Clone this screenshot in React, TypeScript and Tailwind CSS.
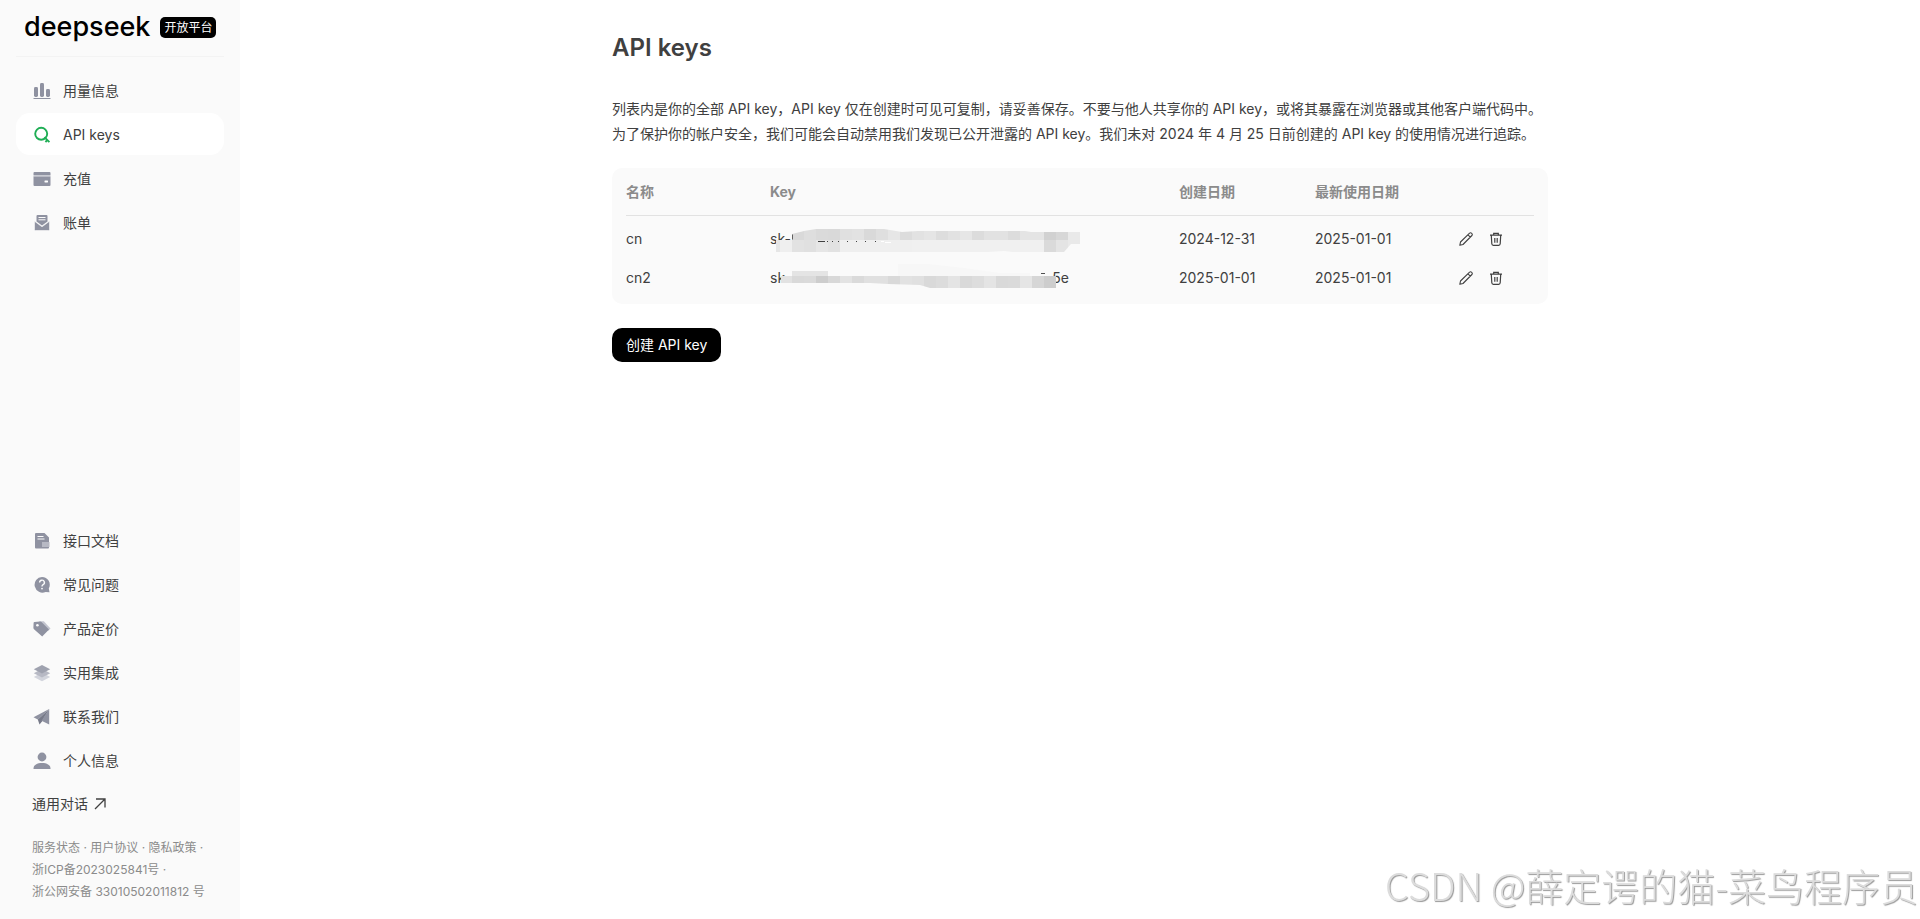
import React from 'react';

interface NavItem {
  label: string;
  icon: React.ReactNode;
  active?: boolean;
}

interface ApiKey {
  name: string;
  start: string;
  end: string;
  created: string;
  lastUsed: string;
  mask: React.ReactNode;
}

const Icon = ({ children }: { children: React.ReactNode }) => (
  <svg viewBox="0 0 18 18" className="h-[18px] w-[18px] shrink-0" fill="#8f92a1" aria-hidden="true">
    {children}
  </svg>
);

const mainNav: NavItem[] = [
  {
    label: '用量信息',
    icon: (
      <Icon>
        <rect x="1" y="5" width="4" height="10" rx="1.4" />
        <rect x="7" y="1" width="4" height="14" rx="1.4" />
        <rect x="13" y="7" width="4" height="8" rx="1.4" />
        <rect x="0.5" y="16" width="17" height="1" />
      </Icon>
    ),
  },
  {
    label: 'API keys',
    active: true,
    icon: (
      <Icon>
        <g fill="none" stroke="#1fae55" strokeWidth="1.9">
          <circle cx="8.2" cy="7.8" r="6" />
          <path d="M11.4 11.2 16.4 16.2M12.4 16l2.4-2.4" />
        </g>
      </Icon>
    ),
  },
  {
    label: '充值',
    icon: (
      <Icon>
        <path d="M1.5 2h15a1 1 0 0 1 1 1v2H.5V3a1 1 0 0 1 1-1Z" />
        <rect x="0.5" y="5" width="17" height="1.5" opacity=".45" />
        <path d="M.5 6.5h17V15a1 1 0 0 1-1 1h-15a1 1 0 0 1-1-1Z" />
        <rect x="11.5" y="10.5" width="3.5" height="2" rx=".4" fill="#fff" />
      </Icon>
    ),
  },
  {
    label: '账单',
    icon: (
      <Icon>
        <path d="M4.5 1h9a1 1 0 0 1 1 1v5.5L9 11.5 3.5 7.5V2a1 1 0 0 1 1-1Z" />
        <path d="M5.5 3.5h7M5.5 5.8h7" stroke="#fafafa" strokeWidth="1" />
        <path d="M1.5 7.2 9 12.8l7.5-5.6V15.5a1 1 0 0 1-1 1h-13a1 1 0 0 1-1-1Z" stroke="#fafafa" strokeWidth=".6" />
      </Icon>
    ),
  },
];

const helpNav: NavItem[] = [
  {
    label: '接口文档',
    icon: (
      <Icon>
        <path d="M3 1h8.5L16 5.5V10H9v6.5H3a1 1 0 0 1-1-1V2a1 1 0 0 1 1-1Z" />
        <path d="M4.5 4.5h6M4.5 7h7" stroke="#fafafa" strokeWidth="1" />
        <rect x="9" y="10" width="7.5" height="5" fill="#b7b9c4" />
        <path d="M9 15h7v.5a1 1 0 0 1-1 1H9Z" />
      </Icon>
    ),
  },
  {
    label: '常见问题',
    icon: (
      <Icon>
        <path d="M9 1a7.8 7.8 0 0 1 6.8 11.6l.7 3.7-3.9-.4A7.8 7.8 0 1 1 9 1Z" />
        <path d="M6.6 6.6a2.4 2.4 0 1 1 3.5 2.1c-.8.5-1.1.9-1.1 1.7" fill="none" stroke="#fafafa" strokeWidth="1.4" />
        <circle cx="9" cy="12.6" r=".9" fill="#fafafa" />
      </Icon>
    ),
  },
  {
    label: '产品定价',
    icon: (
      <Icon>
        <path d="M6 1.3 10.8 1.2 17.5 8.5 15 11Z" fill="#c3c5cf" />
        <path d="M1.5 2 7 1.5a2 2 0 0 1 1.5.5l7.5 7.5-6.8 7L1 9.3a2 2 0 0 1-.6-1.5L.6 3a1 1 0 0 1 .9-1Z" />
        <circle cx="4.4" cy="5.3" r="1.3" fill="#fafafa" />
      </Icon>
    ),
  },
  {
    label: '实用集成',
    icon: (
      <Icon>
        <path d="M9 8.5 17.2 13 9 17.2.8 13Z" fill="#d2d4dc" />
        <path d="M9 4.8 17.2 9.3 9 13.5.8 9.3Z" fill="#b7b9c4" />
        <path d="M9 1 17.2 5.3 9 9.6.8 5.3Z" fill="#9fa2af" />
      </Icon>
    ),
  },
  {
    label: '联系我们',
    icon: (
      <Icon>
        <path d="M16.2 1 .5 9.3l4.3 2.2Z" />
        <path d="M16.2 1 4.8 11.5l1.7 5L9 13.4Z" fill="#777a89" />
        <path d="M16.2 1 8.5 12.7l7.7 3.8Z" />
      </Icon>
    ),
  },
  {
    label: '个人信息',
    icon: (
      <Icon>
        <circle cx="9" cy="5" r="4.4" />
        <path d="M.5 17v-.6C.5 13 4.2 11 9 11s8.5 2 8.5 5.4v.6Z" />
      </Icon>
    ),
  },
];

// Grey level of every 12px block, left to right
const firstTop = [
  '#d9d9d9', '#dedede', '#dadada', '#d9d9d9', '#e0e0e0', '#e2e2e2', '#d9d9d9', '#dfdfdf',
  '#e6e6e6', '#dcdcdc', '#e2e2e2', '#e5e5e5', '#dddddd', '#e2e2e2', '#e6e6e6', '#dcdcdc',
  '#e2e2e2', '#e2e2e2', '#dcdcdc', '#e4e4e4', '#e4e4e4', '#d1d1d1', '#d7d7d7', '#e9e9e9',
];
const firstBottom = [
  '#e2e2e2', '#e0e0e0', '#e6e6e6', '#e2e2e2', '#efefef', '#efefef', '#efefef', '#efefef',
  '#efefef', '#efefef', '#f0f0f0', '#f0f0f0', '#f0f0f0', '#f0f0f0', '#f0f0f0', '#f0f0f0',
  '#f0f0f0', '#f0f0f0', '#f0f0f0', '#f0f0f0', '#f0f0f0', '#dadada', '#e4e4e4', '#e9e9e9',
];
const secondRow = [
  '#e2e2e2', '#d9d9d9', '#dadada', '#cdcdcd', '#d8d8d8', '#e3e3e3', '#dadada', '#e0e0e0',
  '#e0e0e0', '#d9d9d9', '#e2e2e2', '#e0e0e0', '#d9d9d9', '#dcdcdc', '#e4e4e4', '#d9d9d9',
  '#dddddd', '#e4e4e4', '#d9d9d9', '#dadada', '#e5e5e5', '#d6d6d6', '#cdcdcd',
];

const FirstMask = () => (
  <svg width="310" height="39" className="absolute left-0 top-0" aria-hidden="true">
    <clipPath id="mask-a">
      <path d="M22 14 34 11 46 9H114L132 12 148 11H255L261 12H310V24H301L294 32H242L234 31 218 32H6V20H22Z" />
    </clipPath>
    <g clipPath="url(#mask-a)">
      <rect x="6" y="19" width="4" height="13" fill="#e6e6e6" />
      <rect x="10" y="19" width="12" height="13" fill="#efefef" />
      {firstTop.map((fill, i) => (
        <rect key={i} x={22 + i * 12} y="8" width="12" height="12" fill={fill} />
      ))}
      {firstBottom.map((fill, i) => (
        <rect key={i} x={22 + i * 12} y="20" width="12" height="12" fill={fill} />
      ))}
    </g>
    <path d="M22.5 14.5v5" stroke="#606060" />
    <path d="M48 21.5h7M57 21.5h1M62 21.5h1M68 21.5h1M77 21.5h1M86 21.5h1M95 21.5h1M105 21.5h1" stroke="#404040" />
    <path d="M111 21.5h3M115 22.5h6" stroke="#fff" />
  </svg>
);

const SecondMask = () => (
  <svg width="310" height="39" className="absolute left-0 top-0" aria-hidden="true">
    <path d="M128 5h30l36 4 36 5h30v10H128Z" fill="#f7f7f7" />
    <clipPath id="mask-b">
      <path d="M11 17H22V12H58V17H286V29H160L150 26 118 25 100 24H11Z" />
    </clipPath>
    <g clipPath="url(#mask-b)">
      <rect x="22" y="12" width="36" height="6" fill="#e4e4e4" />
      {secondRow.map((fill, i) => (
        <rect key={i} x={10 + i * 12} y="17" width="12" height="12" fill={fill} />
      ))}
    </g>
    <path d="M271 14.5h4" stroke="#505050" />
  </svg>
);

const apiKeys: ApiKey[] = [
  { name: 'cn', start: 'sk-', end: '', created: '2024-12-31', lastUsed: '2025-01-01', mask: <FirstMask /> },
  { name: 'cn2', start: 'sk', end: '5e', created: '2025-01-01', lastUsed: '2025-01-01', mask: <SecondMask /> },
];

const NavList = ({ items }: { items: NavItem[] }) => (
  <ul className="flex flex-col gap-0.5">
    {items.map((item) => (
      <li key={item.label}>
        <a
          href="#"
          className={`flex h-[42px] items-center gap-3 rounded-[14px] px-[17px] pt-0.5 text-sm ${
            item.active ? 'bg-white' : 'hover:bg-gray-100'
          }`}
        >
          {item.icon}
          {item.label}
        </a>
      </li>
    ))}
  </ul>
);

function App() {
  return (
    <div
      lang="zh-CN"
      className="flex min-h-screen bg-white font-['Inter','Noto_Sans_CJK_SC',sans-serif] text-[#404040]"
    >
      {/* Sidebar */}
      <aside className="flex w-60 shrink-0 flex-col bg-[#fafafa] px-4 pb-4">
        <div className="mb-3 flex h-[57px] items-center gap-2.5 border-b border-[#f3f3f3] px-2 pb-0.5">
          <span className="text-[27px] leading-8 font-medium text-black">deepseek</span>
          <span className="rounded-[5px] bg-black px-1 text-xs leading-[21px] whitespace-nowrap text-white">
            开放平台
          </span>
        </div>
        <nav className="flex flex-1 flex-col justify-between">
          <NavList items={mainNav} />
          <div>
            <NavList items={helpNav} />
            <a href="#" className="mt-0.5 flex h-[42px] items-center gap-1.5 px-4 text-sm">
              通用对话
              <svg width="12" height="12" viewBox="0 0 12 12" fill="none" stroke="#404040" strokeWidth="1.3" aria-hidden="true">
                <path d="M1 11 11 1M2 1h9v8.5" />
              </svg>
            </a>
          </div>
        </nav>
        <footer className="mt-3 px-4 text-xs leading-[22px] whitespace-nowrap text-[#8b8b8b]">
          <div>
            <a href="#">服务状态</a> · <a href="#">用户协议</a> · <a href="#">隐私政策</a> ·
          </div>
          <div>
            <a href="#">浙ICP备2023025841号</a> ·
          </div>
          <div>
            <a href="#">浙公网安备 33010502011812 号</a>
          </div>
        </footer>
      </aside>

      {/* Content */}
      <main className="flex-1">
        <div className="mx-auto max-w-[936px] pt-8">
          <h1 className="text-2xl leading-8 font-semibold">API keys</h1>
          <p className="mt-8 text-sm leading-[25px]">
            列表内是你的全部 API key，API key 仅在创建时可见可复制，请妥善保存。不要与他人共享你的 API key，或将其暴露在浏览器或其他客户端代码中。
            <br />
            为了保护你的帐户安全，我们可能会自动禁用我们发现已公开泄露的 API key。我们未对 2024 年 4 月 25 日前创建的 API key 的使用情况进行追踪。
          </p>

          <div className="mt-[22px] rounded-[10px] bg-[#fafafa] px-3.5 pb-1.5">
            <table className="w-full table-fixed border-collapse text-left text-sm">
              <thead>
                <tr className="h-[47px] border-b border-[#e2e2e2] text-[#8b8b8b]">
                  <th className="w-36 pt-0.5 font-bold">名称</th>
                  <th className="pt-0.5 font-bold">Key</th>
                  <th className="w-[136px] pt-0.5 font-bold">创建日期</th>
                  <th className="w-36 pt-0.5 font-bold">最新使用日期</th>
                  <th className="w-[75px]" />
                </tr>
              </thead>
              <tbody className="before:block before:h-1 before:content-['']">
                {apiKeys.map((item) => (
                  <tr key={item.name} className="h-[39px]">
                    <td>{item.name}</td>
                    <td>
                      <div className="relative flex h-[39px] w-[299px] items-center justify-between">
                        <span>{item.start}</span>
                        <span>{item.end}</span>
                        {item.mask}
                      </div>
                    </td>
                    <td>{item.created}</td>
                    <td>{item.lastUsed}</td>
                    <td>
                      <div className="flex gap-4">
                        <button type="button" aria-label="编辑">
                          <svg width="14" height="14" viewBox="0 0 14 14" fill="none" stroke="#404040" strokeWidth="1.1" strokeLinejoin="round" aria-hidden="true">
                            <path d="M.8 13.3 1.5 10 10.6 1.2a1.3 1.3 0 0 1 1.9 0l.4.4a1.3 1.3 0 0 1 0 1.9L4 12.5ZM9 2.8l2.3 2.3" />
                          </svg>
                        </button>
                        <button type="button" aria-label="删除">
                          <svg width="14" height="14" viewBox="0 0 14 14" fill="none" stroke="#404040" strokeWidth="1.2" aria-hidden="true">
                            <path d="M1 3.2h12M4.7 3V1.3h4.6V3M2.3 3.5l.5 8.3c.1 1 .7 1.5 1.5 1.5h5.4c.8 0 1.4-.5 1.5-1.5l.5-8.3M5.8 6v4.8M8.2 6v4.8" />
                          </svg>
                        </button>
                      </div>
                    </td>
                  </tr>
                ))}
              </tbody>
            </table>
          </div>

          <button type="button" className="mt-6 h-[34px] rounded-[10px] bg-black px-3.5 text-sm text-white">
            创建 API key
          </button>
        </div>
      </main>

      <div className="pointer-events-none fixed right-0.5 bottom-3.5 font-['Noto_Sans_CJK_SC',sans-serif] text-[38px] leading-10 font-light whitespace-nowrap text-[#dcdcdc] [text-shadow:1px_1px_1px_#999]">
        CSDN @薛定谔的猫-菜鸟程序员
      </div>
    </div>
  );
}

export default App;
